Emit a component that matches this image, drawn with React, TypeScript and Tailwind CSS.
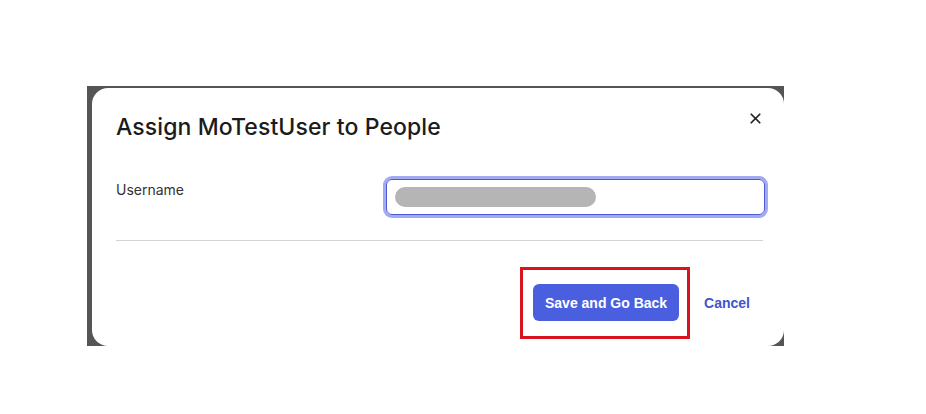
import { X } from 'lucide-react';

export default function App() {
  return (
    <div className="min-h-[414px] w-[926px] bg-white pl-[87px] pt-[86px]">
      {/* dark backdrop strip behind the dialog */}
      <div className="h-[260px] w-[697px] bg-[#555555] pl-[5px] pt-[2px]">
        <div className="flex h-[258px] w-[692px] flex-col rounded-2xl bg-white pl-6 pr-[21px] pt-[25px] font-['Inter',sans-serif]">
          <div className="flex items-start justify-between">
            <h2 className="text-[23px] leading-7 font-medium tracking-[0.1px] text-[#1b1b1b]">
              Assign MoTestUser to People
            </h2>
            <button className="mr-[-1px] mt-[-3px] text-[#222]">
              <X size={17} strokeWidth={2.4} />
            </button>
          </div>

          <div className="mt-[38px] flex items-start justify-between">
            <label className="mt-[1px] text-sm text-[#333]">Username</label>
            <div className="mr-[-2px] flex h-[36px] w-[379px] items-center rounded-md border border-[#4b5bd6] px-2 ring-[3px] ring-[#a3aaf0]">
              <div className="h-5 w-[201px] rounded-full bg-[#b5b5b5]" />
            </div>
          </div>

          <div className="mt-[25px] border-t border-[#d3d3d3]" />

          <div className="mt-[43px] flex items-center justify-end gap-[13px] font-['Liberation_Sans',sans-serif]">
            <div className="relative">
              <button className="h-[37px] w-[146px] rounded-md bg-[#4a5fe0] text-sm font-bold text-white">
                Save and Go Back
              </button>
              {/* highlight annotation */}
              <div className="absolute -left-[13px] -top-[17px] h-[72px] w-[170px] border-[3px] border-[#d8141c]" />
            </div>
            <button className="mr-[1px] h-[37px] px-3 text-sm font-bold text-[#3e55cc]">Cancel</button>
          </div>
        </div>
      </div>
    </div>
  );
}
